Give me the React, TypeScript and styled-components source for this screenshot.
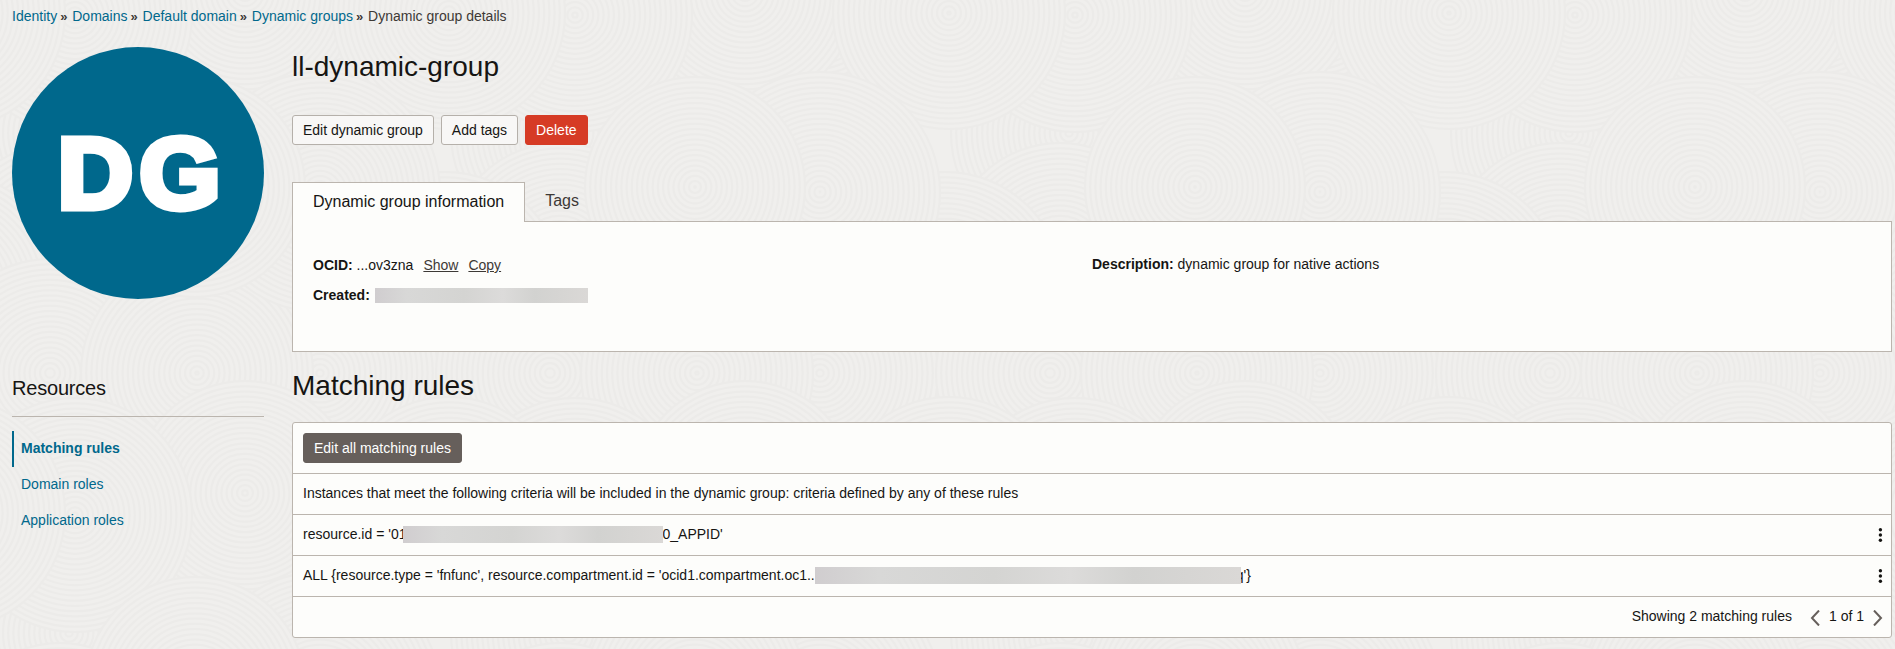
import React from 'react';
import styled, { createGlobalStyle, css } from 'styled-components';

const Global = createGlobalStyle`
  * { box-sizing: border-box; }
  body {
    margin: 0;
    background: #f0efed;
    color: #161513;
    font: 14px/20px "Liberation Sans", Arial, sans-serif;
    overflow: hidden;
  }
`;

const LINE = '#bbb5ae';
const TEAL = '#00688c';

const Page = styled.div`
  position: relative;
  height: 649px;
  padding: 6px 2px 0 12px;
  isolation: isolate;
`;

const Backdrop = styled.svg`
  position: absolute;
  inset: 0;
  z-index: -1;
  width: 100%;
  height: 100%;
`;

const Crumbs = styled.nav`
  display: flex;
  height: 20px;
  color: #3d3936;
`;

const Crumb = styled.a`
  color: ${TEAL};
`;

const Separator = styled.span`
  width: 15.1px;
  padding-left: 3px;
  font-size: 13px;
  font-weight: bold;
  line-height: 21px;
`;

const Columns = styled.div`
  display: grid;
  grid-template-columns: 252px 1600px;
  column-gap: 28px;
  margin-top: 21px;
`;

const Avatar = styled.div`
  display: flex;
  align-items: center;
  justify-content: center;
  width: 252px;
  height: 252px;
  padding: 0 0 1px 8px;
  border-radius: 50%;
  background: ${TEAL};
`;

const Initials = styled.span`
  color: #fff;
  font-size: 100px;
  font-weight: bold;
  line-height: 120px;
  letter-spacing: 6.5px;
  transform: scaleX(1.04);
  -webkit-text-stroke: 7px #fff;
`;

const SideTitle = styled.h2`
  margin: 75px 0 0;
  padding-bottom: 14px;
  border-bottom: 1px solid ${LINE};
  font-size: 20px;
  font-weight: normal;
  line-height: 28px;
  letter-spacing: -0.2px;
`;

const SideList = styled.ul`
  margin: 14px 0 0;
  padding: 0;
  list-style: none;
`;

const SideItem = styled.li<{ $active?: boolean }>`
  height: 36px;
  padding-left: 7px;
  border-left: 2px solid transparent;
  color: ${TEAL};
  line-height: 35px;
  ${p => p.$active && css`
    border-left-color: ${TEAL};
    font-weight: bold;
  `}
`;

const Title = styled.h1`
  margin: 1px 0 0;
  font-size: 28px;
  font-weight: normal;
  line-height: 38px;
`;

const Actions = styled.div`
  display: flex;
  gap: 7px;
  margin-top: 29px;
`;

const Button = styled.button<{ $kind?: 'danger' | 'dark' }>`
  height: 30px;
  padding: 0 10px;
  border: 1px solid #b5b0aa;
  border-radius: 3px;
  background: #f8f7f6;
  color: #161513;
  font: inherit;
  white-space: nowrap;
  ${p => p.$kind === 'danger' && css`border-color: #d63b25; background: #d63b25; color: #fff;`}
  ${p => p.$kind === 'dark' && css`border-color: #665f5b; background: #665f5b; color: #fff;`}
`;

const Tabs = styled.div`
  display: flex;
  margin-top: 37px;
`;

const Tab = styled.div<{ $active?: boolean }>`
  height: 39px;
  padding: 0 20px;
  color: #3d3936;
  font-size: 16px;
  line-height: 37px;
  ${p => p.$active && css`
    z-index: 1;
    height: 40px;
    margin-bottom: -1px;
    border: 1px solid ${LINE};
    border-bottom: 0;
    background: #fdfdfb;
    color: #161513;
  `}
`;

const InfoPanel = styled.section`
  display: grid;
  grid-template-columns: 779px 1fr;
  height: 131px;
  padding: 33px 20px 0;
  border: 1px solid ${LINE};
  background: #fdfdfb;
`;

const Field = styled.div`
  display: flex;
  align-items: center;
  height: 20px;
  margin-bottom: 10px;
  white-space: pre;
`;

const Description = styled(Field)`
  margin-top: -1px;
`;

const TextLink = styled.a`
  margin-left: 10px;
  color: #3d3936;
  text-decoration: underline;
`;

const Redacted = styled.span<{ $w: number; $h: number; $left?: number; $right?: number }>`
  z-index: 1;
  flex: none;
  width: ${p => p.$w}px;
  height: ${p => p.$h}px;
  margin: 0 ${p => p.$right ?? 0}px 0 ${p => p.$left ?? 0}px;
  background: linear-gradient(90deg, #d0cdcf, #d8d8d7 15%, #d4d4d2 42%, #dcdbda 60%, #d2d2d0 75%, #dad8d6);
`;

const Heading = styled.h2`
  margin: 15px 0 0;
  font-size: 28px;
  font-weight: normal;
  line-height: 38px;
`;

const RulesPanel = styled.section`
  margin-top: 17px;
  border: 1px solid ${LINE};
  border-radius: 3px;
  background: #fdfdfb;
`;

const Row = styled.div<{ $h?: number }>`
  display: flex;
  align-items: center;
  height: ${p => p.$h ?? 41}px;
  padding: 0 8px 2px 10px;
  white-space: pre;
  & + & { border-top: 1px solid ${LINE}; }
`;

const Toolbar = styled.div`
  height: 51px;
  padding: 10px;
  border-bottom: 1px solid ${LINE};
`;

const Kebab = styled.svg`
  margin: 2px 0 0 auto;
`;

const Pager = styled.div`
  display: flex;
  align-items: center;
  margin-left: auto;
`;

const Chevron = styled.svg<{ $left: number; $right: number }>`
  margin: 4px ${p => p.$right}px 0 ${p => p.$left}px;
  fill: none;
  stroke: #665f5b;
  stroke-width: 2;
`;

const crumbs = ['Identity', 'Domains', 'Default domain', 'Dynamic groups'];

/* Discs of one wallpaper tile, lowest first: [centre x, centre y, radius]. */
const TILE = 500;
const discs = [
  [318, 10, 116],
  [69, 133, 118],
  [60, 255, 112],
  [445, 290, 118],
  [320, 373, 118],
  [50, 373, 114],
  [197, 373, 116],
  [245, 493, 112],
  [75, 15, 117],
  [449, 13, 116],
  [320, 192, 120],
  [195, 187, 110],
];
const shifts = [-TILE, 0, TILE];

const Wallpaper = () => (
  <Backdrop aria-hidden="true">
    <defs>
      <pattern id="ripples" width={TILE} height={TILE} patternUnits="userSpaceOnUse">
        <rect width={TILE} height={TILE} fill="#f0efed" />
        {discs.map(([x, y, r], i) => shifts.map(dx => shifts.map(dy => (
          <g key={`${i}/${dx}/${dy}`} fill="none" stroke="#ecebe9" strokeWidth="2">
            <circle cx={x + dx} cy={y + dy} r={r} fill="#f0efed" />
            {Array.from({ length: Math.floor(r / 5.2) }, (_, k) => (
              <circle key={k} cx={x + dx} cy={y + dy} r={r - 5.2 * (k + 1)} />
            ))}
          </g>
        ))))}
      </pattern>
    </defs>
    <rect width="100%" height="100%" fill="url(#ripples)" />
  </Backdrop>
);

const RowMenu = () => (
  <Kebab width="6" height="16" viewBox="0 0 6 16" fill="#161513">
    {[2.8, 8, 13.2].map(y => <circle key={y} cx="3.4" cy={y} r="1.7" />)}
  </Kebab>
);

export default function App() {
  return (
    <Page>
      <Global />
      <Wallpaper />
      <Crumbs>
        {crumbs.map(c => (
          <React.Fragment key={c}>
            <Crumb>{c}</Crumb>
            <Separator>»</Separator>
          </React.Fragment>
        ))}
        <span>Dynamic group details</span>
      </Crumbs>
      <Columns>
        <aside>
          <Avatar><Initials>DG</Initials></Avatar>
          <SideTitle>Resources</SideTitle>
          <SideList>
            <SideItem $active>Matching rules</SideItem>
            <SideItem>Domain roles</SideItem>
            <SideItem>Application roles</SideItem>
          </SideList>
        </aside>
        <main>
          <Title>ll-dynamic-group</Title>
          <Actions>
            <Button>Edit dynamic group</Button>
            <Button>Add tags</Button>
            <Button $kind="danger">Delete</Button>
          </Actions>
          <Tabs>
            <Tab $active>Dynamic group information</Tab>
            <Tab>Tags</Tab>
          </Tabs>
          <InfoPanel>
            <div>
              <Field><b>OCID:</b> ...ov3zna<TextLink>Show</TextLink><TextLink>Copy</TextLink></Field>
              <Field><b>Created:</b><Redacted $w={213} $h={15} $left={5} /></Field>
            </div>
            <Description><b>Description:</b> dynamic group for native actions</Description>
          </InfoPanel>
          <Heading>Matching rules</Heading>
          <RulesPanel>
            <Toolbar><Button $kind="dark">Edit all matching rules</Button></Toolbar>
            <Row $h={40}>Instances that meet the following criteria will be included in the dynamic group: criteria defined by any of these rules</Row>
            <Row>resource.id = '01<Redacted $w={260} $h={17} $left={-3} $right={-1} />0_APPID'<RowMenu /></Row>
            <Row>{"ALL {resource.type = 'fnfunc', resource.compartment.id = 'ocid1.compartment.oc1.."}<Redacted $w={426} $h={17} $right={-5} />{"q'}"}<RowMenu /></Row>
            <Row>
              <Pager>
                Showing 2 matching rules
                <Chevron $left={18} $right={9} width="10" height="16"><path d="M9 0.5L2 8L9 15.5" /></Chevron>
                1 of 1
                <Chevron $left={9} $right={0} width="10" height="16"><path d="M1 0.5L8 8L1 15.5" /></Chevron>
              </Pager>
            </Row>
          </RulesPanel>
        </main>
      </Columns>
    </Page>
  );
}
